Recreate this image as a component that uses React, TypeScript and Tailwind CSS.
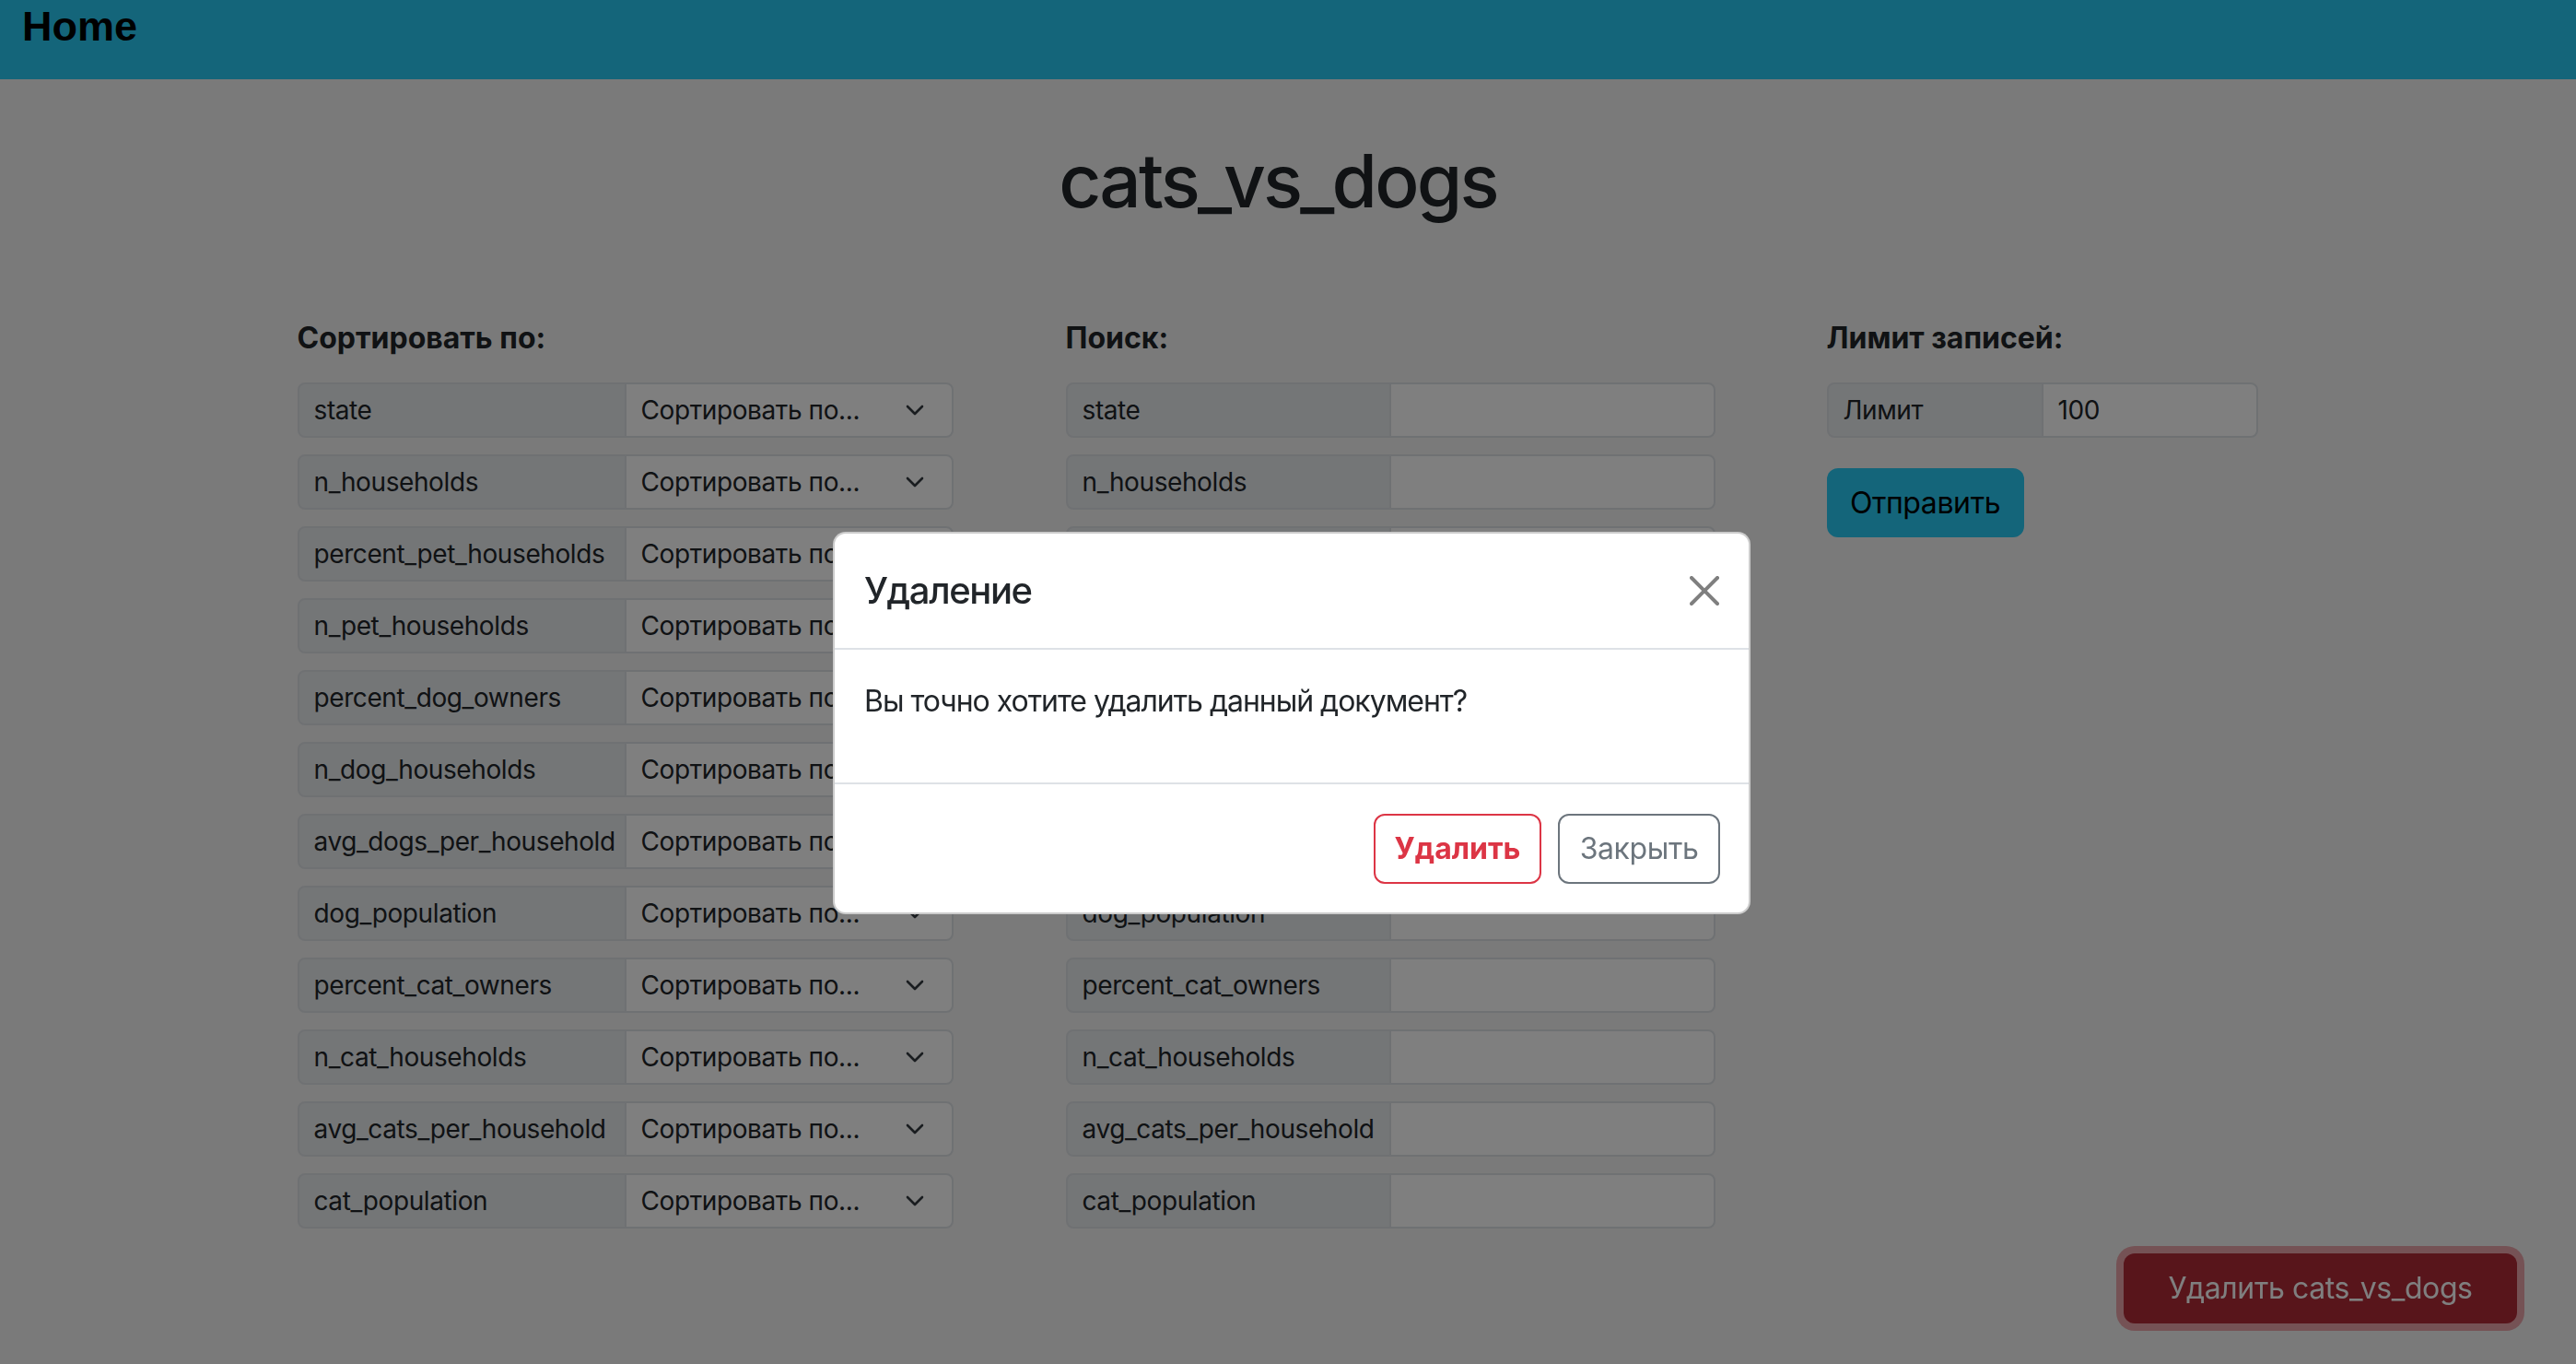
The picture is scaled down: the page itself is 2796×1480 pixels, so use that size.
import React from "react";

const fields = [
  "state",
  "n_households",
  "percent_pet_households",
  "n_pet_households",
  "percent_dog_owners",
  "n_dog_households",
  "avg_dogs_per_household",
  "dog_population",
  "percent_cat_owners",
  "n_cat_households",
  "avg_cats_per_household",
  "cat_population",
];

const font = { fontFamily: "Inter, 'Noto Sans', sans-serif" };

function Chevron() {
  return (
    <svg width="20" height="12" viewBox="0 0 20 12" fill="none">
      <path d="M2 2l8 8 8-8" stroke="#343a40" strokeWidth="2.6" strokeLinecap="round" strokeLinejoin="round" />
    </svg>
  );
}

function SortRow({ name }: { name: string }) {
  return (
    <div className="flex h-[60px] text-[28px] leading-[42px] text-[#212529]">
      <div className="w-[357px] flex items-center px-[16px] bg-[#e9ecef] border-2 border-[#dee2e6] rounded-l-[8px] whitespace-nowrap">
        {name}
      </div>
      <div className="-ml-[2px] w-[357px] flex items-center justify-between pl-[16px] pr-[30px] bg-white border-2 border-[#dee2e6] rounded-r-[8px]">
        <span>Сортировать по...</span>
        <Chevron />
      </div>
    </div>
  );
}

function SearchRow({ name }: { name: string }) {
  return (
    <div className="flex h-[60px] text-[28px] leading-[42px] text-[#212529]">
      <div className="w-[353px] flex items-center px-[16px] bg-[#e9ecef] border-2 border-[#dee2e6] rounded-l-[8px] whitespace-nowrap">
        {name}
      </div>
      <div className="-ml-[2px] w-[354px] bg-white border-2 border-[#dee2e6] rounded-r-[8px]" />
    </div>
  );
}

export default function App() {
  return (
    <div className="min-h-[1480px] bg-[#f4f5f4] relative tracking-[-0.025em]" style={font}>
      <nav className="h-[86px] bg-[#28caf4] pl-[24px] pt-[7px]">
        <div
          className="text-[45px] leading-[44px] font-bold text-black tracking-normal"
          style={{ fontFamily: "'Liberation Sans', Arial, sans-serif" }}
        >
          Home
        </div>
      </nav>

      <div className="pr-[22px]">
        <h1 className="mt-[62px] text-center text-[80px] leading-[96px] font-medium text-[#212529] tracking-[-0.035em]">
          cats_vs_dogs
        </h1>

        <div className="mx-auto w-[2129px] mt-[99px] flex gap-[122px]">
          <div className="w-[712px]">
            <div className="text-[32px] leading-[48px] font-bold text-[#212529] mb-[24px] tracking-normal">
              Сортировать по:
            </div>
            <div className="flex flex-col gap-[18px]">
              {fields.map((f) => (
                <SortRow key={f} name={f} />
              ))}
            </div>
          </div>

          <div className="w-[705px]">
            <div className="text-[32px] leading-[48px] font-bold text-[#212529] mb-[24px] tracking-normal">
              Поиск:
            </div>
            <div className="flex flex-col gap-[18px]">
              {fields.map((f) => (
                <SearchRow key={f} name={f} />
              ))}
            </div>
          </div>

          <div className="w-[469px] ml-[-1px]">
            <div className="text-[32px] leading-[48px] font-bold text-[#212529] mb-[24px] tracking-normal">
              Лимит записей:
            </div>
            <div className="flex h-[60px] text-[28px] leading-[42px] text-[#212529]">
              <div className="w-[235px] flex items-center px-[16px] bg-[#e9ecef] border-2 border-[#dee2e6] rounded-l-[8px]">
                Лимит
              </div>
              <div className="-ml-[2px] w-[235px] flex items-center px-[16px] bg-white border-2 border-[#dee2e6] rounded-r-[8px]">
                100
              </div>
            </div>
            <button className="mt-[33px] h-[75px] w-[214px] rounded-[12px] bg-[#28caf4] text-[32px] leading-[48px] text-black">
              Отправить
            </button>
          </div>
        </div>
      </div>

      <button className="fixed right-[64px] bottom-[44px] h-[76px] w-[427px] rounded-[12px] bg-[#b02a37] text-white text-[32px] leading-[48px] ring-8 ring-[#e15361]/50">
        Удалить cats_vs_dogs
      </button>

      <div className="fixed inset-0 z-40 bg-black/50" />

      <div className="fixed inset-0 z-50 flex justify-center pt-[577px] pl-[8px]">
        <div className="w-[996px] h-fit bg-white rounded-[14px] border-2 border-black/20 text-[#212529]">
          <div className="flex items-center justify-between px-[32px] py-[32px] border-b-2 border-[#dee2e6]">
            <div className="text-[40px] leading-[60px] font-medium tracking-[-0.035em]">Удаление</div>
            <svg width="32" height="32" viewBox="0 0 16 16" fill="#000" fillOpacity="0.5">
              <path d="M.293.293a1 1 0 0 1 1.414 0L8 6.586 14.293.293a1 1 0 1 1 1.414 1.414L9.414 8l6.293 6.293a1 1 0 0 1-1.414 1.414L8 9.414l-6.293 6.293a1 1 0 0 1-1.414-1.414L6.586 8 .293 1.707a1 1 0 0 1 0-1.414z" />
            </svg>
          </div>
          <div className="p-[32px]">
            <p className="text-[32px] leading-[48px] mb-[32px] tracking-[-0.032em]">
              Вы точно хотите удалить данный документ?
            </p>
          </div>
          <div className="flex justify-end gap-[18px] pt-[32px] pb-[31px] pr-[31px] border-t-2 border-[#dee2e6]">
            <button className="h-[76px] w-[182px] rounded-[12px] border-2 border-[#dc3545] text-[#dc3545] text-[32px] font-bold tracking-normal">
              Удалить
            </button>
            <button className="h-[76px] w-[176px] rounded-[12px] border-2 border-[#6c757d] text-[#6c757d] text-[32px]">
              Закрыть
            </button>
          </div>
        </div>
      </div>
    </div>
  );
}
